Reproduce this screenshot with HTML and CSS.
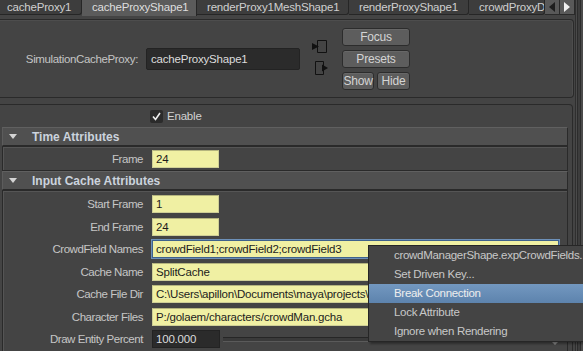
FILE: index.html
```html
<!DOCTYPE html>
<html lang="en">
<head>
    <meta charset="UTF-8">
    <meta name="viewport" content="width=device-width, initial-scale=1.0">
    <title>Attribute Editor - cacheProxyShape1</title>
    <link rel="stylesheet" href="styles.css">
</head>
<body>

<div class="window">
    <div class="main">

        <!-- node tabs -->
        <div class="tabs">
            <div class="tab tab-first">cacheProxy1</div>
            <div class="tab tab-shape active">cacheProxyShape1</div>
            <div class="tab tab-mesh">renderProxy1MeshShape1</div>
            <div class="tab tab-render">renderProxyShape1</div>
            <div class="tab tab-crowd">crowdProxyDisplay1</div>
            <div class="tab-arrow"><span class="arrow-left"></span></div>
            <div class="tab-arrow"><span class="arrow-right"></span></div>
        </div>

        <!-- node name + buttons -->
        <div class="node-frame">
            <div class="node-label">SimulationCacheProxy:</div>
            <div class="node-name">cacheProxyShape1</div>
            <div class="conn-icons">
                <svg width="16" height="13" viewBox="0 0 16 13">
                    <path d="M5.5 0.5 H14.5 V12.5 H5.5 Z" fill="none" stroke="#111" stroke-width="1"/>
                    <path d="M0 3 L7 6.5 L0 10 Z" fill="#111"/>
                </svg>
                <svg width="16" height="14" viewBox="0 0 16 14">
                    <path d="M3.5 0.5 H11.5 V13.5 H3.5 Z" fill="none" stroke="#111" stroke-width="1"/>
                    <path d="M10 3.5 L16 7 L10 10.5 Z" fill="#111"/>
                </svg>
            </div>
            <div class="node-buttons">
                <button class="btn btn-wide">Focus</button>
                <button class="btn btn-wide">Presets</button>
                <button class="btn">Show</button>
                <button class="btn">Hide</button>
            </div>
        </div>

        <!-- attributes -->
        <div class="scroll-frame">
            <div class="enable-row">
                <span class="checkbox">
                    <svg width="11" height="11" viewBox="0 0 11 11">
                        <path d="M2 5.5 L4.5 8.5 L9 2" fill="none" stroke="#eee" stroke-width="1.6"/>
                    </svg>
                </span>
                <span>Enable</span>
            </div>

            <div class="section">
                <div class="section-head"><span class="caret"></span>Time Attributes</div>
                <div class="section-body">
                    <div class="row">
                        <label class="row-label">Frame</label>
                        <div class="field field-short">24</div>
                    </div>
                </div>
            </div>

            <div class="section">
                <div class="section-head"><span class="caret"></span>Input Cache Attributes</div>
                <div class="section-body body-padded">
                    <div class="row">
                        <label class="row-label">Start Frame</label>
                        <div class="field field-short">1</div>
                    </div>
                    <div class="row">
                        <label class="row-label">End Frame</label>
                        <div class="field field-short">24</div>
                    </div>
                    <div class="row">
                        <label class="row-label">CrowdField Names</label>
                        <div class="field field-long selected">crowdField1;crowdField2;crowdField3</div>
                    </div>
                    <div class="row">
                        <label class="row-label">Cache Name</label>
                        <div class="field field-long">SplitCache</div>
                    </div>
                    <div class="row">
                        <label class="row-label">Cache File Dir</label>
                        <div class="field field-long">C:\Users\apillon\Documents\maya\projects\default\cache</div>
                    </div>
                    <div class="row">
                        <label class="row-label">Character Files</label>
                        <div class="field field-long">P:/golaem/characters/crowdMan.gcha</div>
                    </div>
                    <div class="row">
                        <label class="row-label">Draw Entity Percent</label>
                        <div class="field field-dark">100.000</div>
                        <div class="slider"></div>
                    </div>
                </div>
            </div>
        </div>
    </div>
    <div class="side"></div>
</div>

<!-- right click menu -->
<div class="context-menu">
    <div class="menu-item">crowdManagerShape.expCrowdFields...</div>
    <div class="menu-item">Set Driven Key...</div>
    <div class="menu-item hover">Break Connection</div>
    <div class="menu-item">Lock Attribute</div>
    <div class="menu-item">Ignore when Rendering</div>
</div>
<div class="menu-tail"></div>

</body>
</html>
```
FILE: styles.css
```css
* {
    box-sizing: border-box;
}
body {
    margin: 0;
    width: 583px;
    height: 351px;
    overflow: hidden;
    position: relative;
    background-color: #444444;
    font-family: "Liberation Sans", Arial, sans-serif;
    font-size: 11px;
    letter-spacing: -0.2px;
    color: #c6c6c6;
}
.window {
    display: flex;
    height: 351px;
}
.main {
    width: 575px;
    flex: none;
}
.side {
    flex: 1;
    background: linear-gradient(to right, #2f2f2f 0, #2f2f2f 1px, #4a4a4a 1px, #4a4a4a 2px, #2c2c2c 2px, #2c2c2c 3px, #3d3d3d 3px, #3d3d3d 5px, #2c2c2c 5px, #2c2c2c 6px, #4a4a4a 6px);
}

/* tabs */
.tabs {
    display: flex;
    height: 16px;
}
.tab {
    flex: none;
    height: 15px;
    line-height: 14px;
    padding-left: 10px;
    background-color: #3d3d3d;
    border-right: 1px solid #262626;
    border-bottom: 1px solid #262626;
    border-bottom-right-radius: 3px;
    white-space: nowrap;
    overflow: hidden;
    font-size: 11.5px;
    color: #cfcfcf;
}
.tab.active {
    height: 16px;
    background-color: #5b5b5b;
    border-bottom: none;
    border-radius: 0;
    color: #dedede;
}
.tab-first { width: 82px; padding-left: 7px; }
.tab-shape { width: 115px; }
.tab-mesh { width: 152px; }
.tab-render { width: 120px; }
.tab-crowd { width: 76px; }
.tab-arrow {
    flex: none;
    width: 15px;
    height: 15px;
    background-color: #595959;
    border-right: 1px solid #2a2a2a;
    border-bottom: 1px solid #2a2a2a;
    display: flex;
    align-items: center;
    justify-content: center;
}
.arrow-left {
    border-top: 5px solid transparent;
    border-bottom: 5px solid transparent;
    border-right: 6px solid #1e1e1e;
}
.arrow-right {
    border-top: 5px solid transparent;
    border-bottom: 5px solid transparent;
    border-left: 6px solid #f0f0f0;
}

/* node frame */
.node-frame {
    margin-top: 3px;
    margin-right: 1px;
    height: 79px;
    border: 1px solid #2a2a2a;
    border-left: none;
    border-radius: 0 4px 4px 0;
    box-shadow: inset 0 1px 0 #4d4d4d, inset -1px 0 0 #4d4d4d;
    display: flex;
    align-items: center;
}
.node-label {
    width: 138px;
    text-align: right;
    font-size: 11.5px;
    letter-spacing: -0.35px;
    color: #c4c4c4;
}
.node-name {
    margin-left: 8px;
    width: 154px;
    height: 22px;
    line-height: 20px;
    padding-left: 4px;
    background-color: #2b2b2b;
    border: 1px solid #232323;
    border-radius: 2px;
    font-size: 11.5px;
    color: #dcdcdc;
}
.conn-icons {
    margin-left: 12px;
    margin-top: -3px;
    display: flex;
    flex-direction: column;
    gap: 8px;
}
.node-buttons {
    margin-left: 14px;
    display: grid;
    grid-template-columns: 32px 33px;
    grid-auto-rows: 18px;
    column-gap: 3px;
    row-gap: 4px;
}
.btn {
    margin: 0;
    padding: 0;
    font-family: inherit;
    font-size: 12px;
    letter-spacing: -0.2px;
    color: #d4d4d4;
    background-color: #5d5d5d;
    border: 1px solid #2c2c2c;
    border-radius: 3px;
    box-shadow: inset 0 1px 0 #676767;
}
.btn-wide {
    grid-column: span 2;
}

/* attribute area */
.scroll-frame {
    margin-top: 6px;
    margin-right: 2px;
    height: 260px;
    border: 1px solid #2a2a2a;
    border-left: none;
    border-radius: 0 4px 0 0;
}
.enable-row {
    height: 22px;
    padding-left: 150px;
    display: flex;
    align-items: center;
    gap: 4px;
    font-size: 11.5px;
    color: #d2d2d2;
}
.checkbox {
    width: 13px;
    height: 13px;
    background-color: #2b2b2b;
    border-radius: 2px;
    display: flex;
    align-items: center;
    justify-content: center;
}
.section {
    margin: 0 4px 0 2px;
}
.section-head {
    height: 19px;
    display: flex;
    align-items: center;
    padding-left: 6px;
    background-color: #505050;
    border: 1px solid #2a2a2a;
    border-top-color: #606060;
    border-left-color: #5c5c5c;
    font-size: 12px;
    font-weight: bold;
    letter-spacing: 0;
    color: #cbd3dd;
}
.caret {
    width: 0;
    height: 0;
    margin-right: 15px;
    border-left: 4px solid transparent;
    border-right: 4px solid transparent;
    border-top: 5px solid #d4d4d4;
}
.section-body {
    border: 1px solid #2a2a2a;
    box-shadow: inset 1px 1px 0 #555555;
}
.body-padded {
    padding-top: 2px;
    padding-bottom: 4px;
}
.row {
    height: 22.5px;
    display: flex;
    align-items: center;
}
.section-body > .row:only-child {
    height: 23px;
}
.row-label {
    width: 140px;
    text-align: right;
    font-size: 11.5px;
    letter-spacing: -0.45px;
    color: #c6c6c6;
}
.field {
    margin-left: 9px;
    height: 18px;
    line-height: 16px;
    padding-left: 3px;
    background-color: #f0f0a3;
    border: 1px solid #cfcf96;
    border-top-color: #b4b47e;
    font-size: 11.5px;
    color: #1c1c1c;
    white-space: nowrap;
    overflow: hidden;
}
.field-short {
    width: 67px;
}
.field-long {
    width: 407px;
}
.field.selected {
    border-color: #3f628c;
    box-shadow: 0 0 0 1px #6d90b8;
}
.field-dark {
    width: 68px;
    background-color: #2b2b2b;
    border-color: #232323;
    color: #dcdcdc;
}
.slider {
    margin-left: 3px;
    width: 336px;
    height: 5px;
    background-color: #3a3a3a;
    border-top: 1px solid #262626;
    border-bottom: 1px solid #5a5a5a;
}

/* popup menu */
.context-menu {
    position: absolute;
    left: 368px;
    top: 245px;
    width: 240px;
    background-color: #444444;
    border: 1px solid #262626;
    box-shadow: 2px 2px 2px rgba(0, 0, 0, 0.35);
    z-index: 10;
}
.menu-item {
    height: 19px;
    line-height: 19px;
    padding-left: 25px;
    white-space: nowrap;
    font-size: 11.5px;
    letter-spacing: -0.3px;
    color: #c8c8c8;
}
.menu-item.hover {
    background: linear-gradient(#7398c0, #5d83ad);
    color: #eeeeee;
}
.menu-tail {
    position: absolute;
    left: 552px;
    top: 342px;
    border-left: 3px solid transparent;
    border-right: 3px solid transparent;
    border-top: 3px solid #8a8a8a;
}
```
